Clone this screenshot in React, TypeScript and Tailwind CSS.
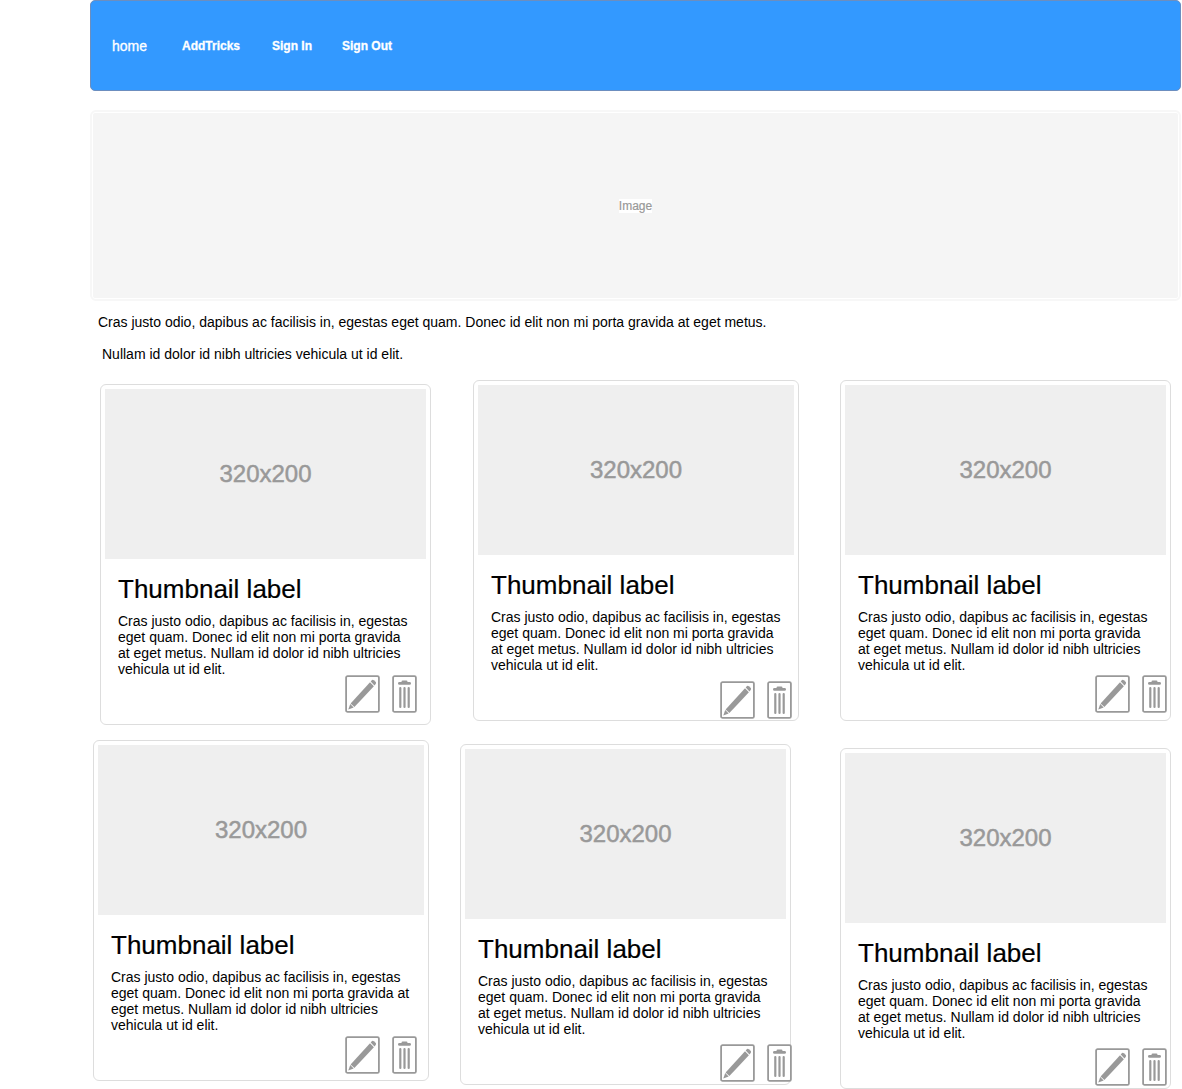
type CardProps = { card: string; text: string; actions: string };

const BODY =
  "Cras justo odio, dapibus ac facilisis in, egestas eget quam. Donec id elit non mi porta gravida at eget metus. Nullam id dolor id nibh ultricies vehicula ut id elit.";

function EditIcon() {
  return (
    <svg width="35" height="38" viewBox="0 0 35 38" fill="none" className="shrink-0">
      <rect x="1.1" y="1.1" width="32.8" height="35.8" rx="1.5" stroke="#999" strokeWidth="1.8" />
      <path d="M5.6 28.4 25 7.3 28.9 11.2 9.4 32Z" fill="#999" />
      <path d="M25.7 6.5 27 5.1Q27.9 4.4 28.8 5.2L30.8 7.1Q31.4 7.9 30.7 9L29.5 10.4Z" fill="#999" />
      <path d="M5.2 29 8.7 32.4 3.3 34.4Z" fill="#999" />
    </svg>
  );
}

function TrashIcon() {
  return (
    <svg width="25" height="38" viewBox="0 0 25 38" fill="none" className="shrink-0">
      <rect x="1.1" y="1.1" width="22.8" height="35.8" rx="1.5" stroke="#999" strokeWidth="1.8" />
      <path d="M7.4 8.4H17.6" stroke="#999" strokeWidth="2.8" strokeLinecap="round" />
      <path d="M9.5 7.4V6.8Q9.5 5.6 10.7 5.6H14.3Q15.5 5.6 15.5 6.8V7.4Z" fill="#999" />
      <path d="M8.3 13V32M12.5 13V32M16.7 13V32" stroke="#999" strokeWidth="2.2" strokeLinecap="round" />
    </svg>
  );
}

function Card({ card, text, actions }: CardProps) {
  return (
    <article className={`h-[341px] shrink-0 rounded-[6px] border border-[#ddd] bg-white p-1 ${card}`}>
      <div className="flex h-[170px] items-center justify-center bg-[#efefef] text-[24px] text-[#999] [-webkit-text-stroke:0.5px_#999]">
        320x200
      </div>
      <h2 className="ml-[13px] mt-[15px] h-[39px] text-[26px] leading-[31px] [-webkit-text-stroke:0.2px_black]">
        Thumbnail label
      </h2>
      <p className={`ml-[13px] text-[14px] leading-4 ${text}`}>{BODY}</p>
      <div className={`flex w-[72px] gap-3 ${actions}`}>
        <EditIcon />
        <TrashIcon />
      </div>
    </article>
  );
}

const ROWS: CardProps[][] = [
  [
    { card: "ml-[10px] mt-1 w-[331px]", text: "w-[295px]", actions: "ml-[240px] -mt-[2px]" },
    { card: "ml-[42px] w-[326px]", text: "w-[290px]", actions: "ml-[242px] mt-2" },
    { card: "ml-[41px] w-[331px]", text: "w-[295px]", actions: "ml-[250px] mt-[2px]" },
  ],
  [
    { card: "ml-[3px] w-[336px]", text: "w-[300px]", actions: "ml-[247px] mt-[3px]" },
    { card: "ml-[31px] mt-1 w-[331px]", text: "w-[295px]", actions: "ml-[255px] mt-[7px]" },
    { card: "ml-[49px] mt-2 w-[331px]", text: "w-[295px]", actions: "ml-[250px] mt-[7px]" },
  ],
];

export default function App() {
  return (
    <div className="h-[1089px] w-[1182px] overflow-hidden bg-white pl-[90px] font-['Liberation_Sans',Arial,sans-serif] text-black">
      <nav className="flex h-[91px] w-[1091px] items-center rounded-[5px] border border-[#6c8ebf] bg-[#3399ff] pl-[21px] text-[12px] font-bold text-white [-webkit-text-stroke:0.3px_white]">
        <a className="w-[70px] pt-0.5 text-[14px] font-normal">home</a>
        <a className="w-[90px]">AddTricks</a>
        <a className="w-[70px]">Sign In</a>
        <a>Sign Out</a>
      </nav>
      <div className="mt-[19px] h-[191px] w-[1091px] rounded-[6px] border-2 border-[#f7f7f7] p-px">
        <div className="flex h-full items-center justify-center rounded-[2px] bg-[#f5f5f5] text-[12px] leading-[14px] text-[#999]">
          <span className="bg-white [-webkit-text-stroke:0.2px_#999]">Image</span>
        </div>
      </div>
      <p className="ml-2 mt-[13px] text-[14px] leading-4">
        Cras justo odio, dapibus ac facilisis in, egestas eget quam. Donec id elit non mi porta gravida at eget metus.
      </p>
      <p className="ml-3 mt-4 text-[14px] leading-4">Nullam id dolor id nibh ultricies vehicula ut id elit.</p>
      <main className="mt-[18px] flex flex-col gap-[15px]">
        {ROWS.map((row, i) => (
          <div key={i} className="flex items-start">
            {row.map((c, j) => (
              <Card key={j} {...c} />
            ))}
          </div>
        ))}
      </main>
    </div>
  );
}
